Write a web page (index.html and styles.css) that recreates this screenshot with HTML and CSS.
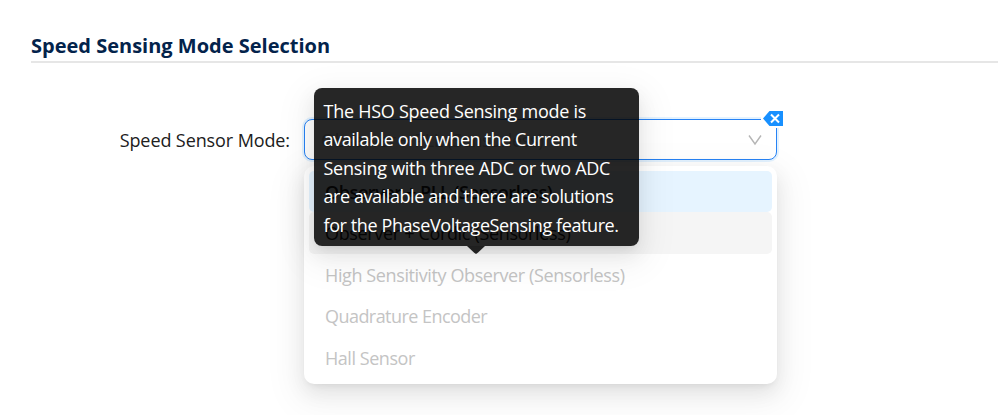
FILE: index.html
```html
<!DOCTYPE html>
<html lang="en">
<head>
<meta charset="utf-8">
<title>Speed Sensing Mode Selection</title>
<link rel="stylesheet" href="styles.css">
</head>
<body>
<main class="page">
  <h1 class="title"><span>Speed Sensing Mode Selection</span></h1>
  <div class="field">
    <label class="label">Speed Sensor Mode:</label>
    <div class="control">
      <div class="select">
        <span class="value">Observer + PLL (Sensorless)</span>
        <svg class="chevron" width="14" height="12" viewBox="0 0 14 12"><path d="M1 1.5 7 10 13 1.5" fill="none" stroke="#b5b5b5" stroke-width="1.4"/></svg>
        <svg class="clear" width="23" height="19" viewBox="0 0 23 19"><path d="M0 0h23v19H0z" fill="#fff"/><path d="M8.500 2H22V17H8.500L2 9.500z" fill="#1890ff"/><path d="m10 5.500 8 8m0-8-8 8" stroke="#fff" stroke-width="2"/></svg>
      </div>
      <ul class="dropdown">
        <li class="option selected">Observer + PLL (Sensorless)</li>
        <li class="option active">Observer + Cordic (Sensorless)</li>
        <li class="option disabled">High Sensitivity Observer (Sensorless)</li>
        <li class="option disabled encoder">Quadrature Encoder</li>
        <li class="option disabled hall">Hall Sensor</li>
      </ul>
      <div class="tooltip" role="tooltip">
        <span class="line l1">The HSO Speed Sensing mode is</span>
        <span class="line l2">available only when the Current</span>
        <span class="line l3">Sensing with three ADC or two ADC</span>
        <span class="line l4">are available and there are solutions</span>
        <span class="line l5">for the PhaseVoltageSensing feature.</span>
      </div>
    </div>
  </div>
</main>
</body>
</html>
```
FILE: styles.css
```css
* { box-sizing: border-box; }
body { margin: 0; background: #fff; height: 415px; overflow: hidden; font-family: "Segoe UI", "Open Sans", "Noto Sans", sans-serif; font-size: 18px; color: #202020; }
.page { padding: 31px 0 0 31px; }
.title { margin: 0; height: 32px; border-bottom: 2px solid #e6e6e6; color: #03234b; font-size: 20px; line-height: 30px; font-weight: 700; white-space: nowrap; }
.field { display: flex; margin-top: 56px; }
.label { width: 273px; padding-right: 14px; text-align: right; line-height: 43px; letter-spacing: -0.1px; white-space: nowrap; }
.control { position: relative; width: 473px; }
.select { position: relative; height: 41px; display: flex; align-items: center; justify-content: space-between; padding: 0 14px 0 16px; border: 1px solid #2783f5; border-radius: 8px; background: #fff; box-shadow: 0 0 0 2px #e3f2ff; }
.value { color: #bfbfbf; letter-spacing: -0.35px; }
.clear { position: absolute; right: -8px; top: -11px; }
.dropdown { position: absolute; left: 0; top: 47px; width: 473px; height: 218px; margin: 0; padding: 4.500px 5px; list-style: none; background: #fff; border-radius: 10px; box-shadow: 0 8px 20px rgba(0,0,0,.08), 0 4px 8px -5px rgba(0,0,0,.12), 0 11px 34px 10px rgba(0,0,0,.05); }
.option { height: 41.6px; line-height: 42px; padding-left: 16px; border-radius: 5px; letter-spacing: -0.39px; white-space: nowrap; }
.selected { background: #e6f4ff; font-weight: 600; letter-spacing: -0.42px; }
.active { background: #f5f5f5; letter-spacing: -0.34px; }
.disabled { color: #c4c4c4; }
.encoder { letter-spacing: -0.55px; }
.hall { letter-spacing: -0.45px; }
.tooltip { position: absolute; left: 10px; top: -31.500px; width: 324.500px; height: 158.500px; padding: 9px 9px 8px 9.500px; border-radius: 8px; background: rgba(0,0,0,.85); color: #fff; box-shadow: 0 8px 20px rgba(0,0,0,.08), 0 4px 8px -5px rgba(0,0,0,.12), 0 11px 34px 10px rgba(0,0,0,.05); }
.tooltip::after { content: ""; position: absolute; left: 153px; top: 158.500px; width: 18px; height: 8px; background: rgba(0,0,0,.85); clip-path: polygon(0 0, 100% 0, 60% 85%, 50% 100%, 40% 85%); }
.line { display: block; width: max-content; line-height: 28.6px; white-space: nowrap; }
.l1 { letter-spacing: -0.27px; }
.l2 { letter-spacing: -0.42px; }
.l3 { letter-spacing: -0.25px; }
.l4 { letter-spacing: -0.42px; }
.l5 { letter-spacing: -0.4px; }
```
